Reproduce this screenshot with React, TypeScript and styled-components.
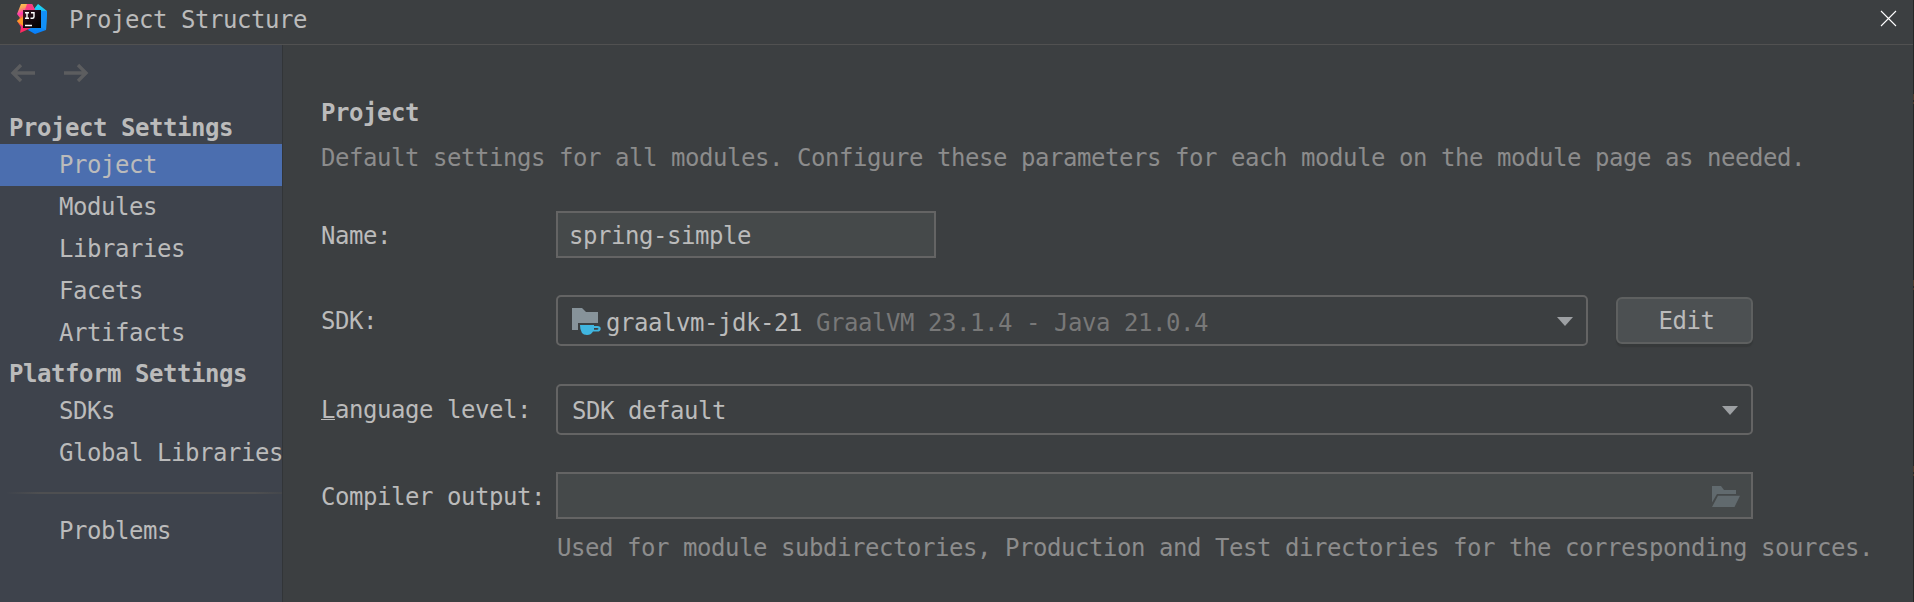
import React from 'react';
import styled, { createGlobalStyle, css } from 'styled-components';

const GlobalStyle = createGlobalStyle`
  * { box-sizing: border-box; }
  body { margin: 0; background: #3c3f41; overflow: hidden; }
`;

const Screen = styled.div`
  width: 1914px;
  height: 602px;
  display: flex;
  overflow: hidden;
`;

const Dialog = styled.div`
  width: 1913px;
  display: flex;
  flex-direction: column;
  background: #3c3f41;
  color: #bbbbbb;
  font: 24px/28px 'DejaVu Sans Mono', 'Liberation Mono', monospace;
  letter-spacing: -0.449px;
  white-space: pre;
  overflow: hidden;
`;

/* Sliver of the editor window behind the dialog */
const Backdrop = styled.div`
  width: 1px;
  background: repeating-linear-gradient(180deg, #262626 0 94px, #4d3a2b 94px 100px, #262626 100px 102px, #4d3a2b 102px 104px, #262626 104px 186px);
`;

const TitleBar = styled.header`
  height: 45px;
  flex: none;
  display: flex;
  align-items: flex-start;
  border-bottom: 1px solid #515151;
  padding: 3px 16px 0 16px;
`;

const Title = styled.h1`
  margin: 3px 0 0 21px;
  font: inherit;
  flex: 1;
`;

const CloseButton = styled.button`
  border: 0;
  padding: 0;
  margin-top: 7px;
  background: none;
  display: flex;
`;

const Body = styled.div`
  flex: 1;
  display: flex;
  min-height: 0;
`;

const Sidebar = styled.nav`
  width: 283px;
  flex: none;
  background: #3e434c;
  border-right: 1px solid #323538;
  overflow: hidden;
`;

const NavArrows = styled.div`
  height: 63px;
  padding: 18px 0 0 10px;
  display: flex;
  gap: 27px;
`;

const GroupTitle = styled.div`
  height: 36px;
  padding: 6px 0 0 9px;
  font-weight: bold;
`;

const NavItem = styled.div<{ $selected?: boolean }>`
  height: 42px;
  padding: 7px 0 0 59px;
  ${(p) => p.$selected && css`background: #4b6eaf;`}
`;

const Divider = styled.div`
  height: 2px;
  margin: 18px 0 16px 6px;
  background: linear-gradient(90deg, transparent, #4e4f51 12%, #4e4f51 90%, #44474c);
`;

const Content = styled.main`
  flex: 1;
  min-width: 0;
  padding: 54px 0 0 38px;
`;

const Heading = styled.h2`
  margin: 0 0 17px;
  font: inherit;
  font-weight: bold;
`;

const Hint = styled.p`
  margin: 0;
  color: #8c8c8c;
`;

const OutputHint = styled(Hint)`
  margin: 15px 0 0 236px;
`;

const Row = styled.div<{ $gap: number }>`
  display: flex;
  align-items: center;
  margin-top: ${(p) => p.$gap}px;
`;

const Label = styled.label<{ $drop?: number }>`
  width: 235px;
  flex: none;
  padding-top: ${(p) => p.$drop ?? 0}px;
`;

const Mnemonic = styled.span`
  text-decoration: underline;
  text-decoration-thickness: 1px;
  text-underline-offset: 1px;
`;

const TextField = styled.div<{ $width: number }>`
  width: ${(p) => p.$width}px;
  height: 47px;
  border: 2px solid #646464;
  background: #45494a;
  display: flex;
  align-items: center;
  padding: 2px 11px 0 11px;
`;

const Combo = styled.div<{ $width: number }>`
  width: ${(p) => p.$width}px;
  height: 51px;
  border: 2px solid #646464;
  border-radius: 5px;
  display: flex;
  align-items: center;
  padding: 1px 13px 0 14px;
`;

const Value = styled.span<{ $drop?: number }>`
  flex: 1;
  padding-top: ${(p) => p.$drop ?? 0}px;
`;

const Muted = styled.span`
  color: #787878;
`;

const Button = styled.button`
  width: 137px;
  height: 47px;
  margin: 0 0 0 28px;
  border: 2px solid #5e6060;
  border-radius: 6px;
  background: #4c5052;
  box-shadow: 0 3px 1px #36393a;
  color: inherit;
  font: inherit;
  letter-spacing: inherit;
  padding: 0 0 0 4px;
`;

const Logo = () => (
  <svg width="32" height="32" viewBox="0 0 32 32">
    <defs>
      <linearGradient id="warm" x1="0" y1="0" x2="0.2" y2="1">
        <stop offset="0" stopColor="#fcd04a" />
        <stop offset="0.18" stopColor="#fba05a" />
        <stop offset="0.36" stopColor="#ff35b5" />
        <stop offset="0.55" stopColor="#fc801d" />
        <stop offset="0.8" stopColor="#fe2880" />
        <stop offset="1" stopColor="#fe2857" />
      </linearGradient>
      <linearGradient id="cool" x1="0" y1="0" x2="0" y2="1">
        <stop offset="0" stopColor="#1fdcf5" />
        <stop offset="0.5" stopColor="#16a0f2" />
        <stop offset="1" stopColor="#087cfa" />
      </linearGradient>
      <linearGradient id="tile" x1="0" y1="0" x2="1" y2="1">
        <stop offset="0" stopColor="#3a1424" />
        <stop offset="0.5" stopColor="#14080e" />
        <stop offset="1" stopColor="#000" />
      </linearGradient>
    </defs>
    <path d="M18 6L22 1L31 8L30 27L19 31L12 27Z" fill="url(#cool)" />
    <path d="M5 1L16 1L19 7L15 25L4 30L5 24L1 18L4 15L1 11Z" fill="url(#warm)" />
    <path d="M11 1H16L19 7H9Z" fill="#fb3b83" />
    <path d="M1 18L7 14V23Z" fill="#fc9a2a" />
    <path d="M25 8L31 8L30 27L25 24Z" fill="#1290f8" />
    <rect x="7" y="7" width="18" height="18" fill="url(#tile)" />
    <path d="M9 9.7H13M11 9.7V15.3M9 15.3H13M15 9.7H18V13.8Q18 15.3 16.5 15.3H14.5M9 22.5H16" stroke="#fff" strokeWidth="1.4" fill="none" />
  </svg>
);

const Arrow = ({ back }: { back?: boolean }) => (
  <svg width="26" height="20" viewBox="0 0 26 20" fill="none" stroke="#5c5d5f" strokeWidth="3.4">
    <path d={back ? 'M25 10H3M11 2L3 10L11 18' : 'M1 10H23M15 2L23 10L15 18'} />
  </svg>
);

const Chevron = () => (
  <svg width="16" height="9" viewBox="0 0 16 9">
    <path d="M0 0H16L8 9Z" fill="#9da0a3" />
  </svg>
);

const SdkIconBox = styled.svg`
  flex: none;
  margin-right: 4px;
`;

const SdkIcon = () => (
  <SdkIconBox width="30" height="27" viewBox="0 0 30 27">
    <path d="M0 0H10L14 4H26V15H6V22H0Z" fill="#87939a" />
    <path
      d="M8 17H22V18H25.3Q28.7 18 28.7 20.7Q28.7 23.5 25.3 23.5H21Q19 27 15 27Q8 27 8 17ZM22 20V21.7H25Q26.5 21.7 26.5 20.8Q26.5 20 25 20Z"
      fill="#40b6e0"
      fillRule="evenodd"
    />
  </SdkIconBox>
);

const FolderIcon = () => (
  <svg width="28" height="21" viewBox="0 0 28 21" fill="#616a6e">
    <path d="M0 0H9L12 4H24V8H5L0 16.5Z" />
    <path d="M6 9.7H28L22.5 21H0Z" />
  </svg>
);

export default function App() {
  return (
    <Screen>
      <GlobalStyle />
      <Dialog>
        <TitleBar>
          <Logo />
          <Title>Project Structure</Title>
          <CloseButton aria-label="Close">
            <svg width="17" height="17" viewBox="0 0 17 17" stroke="#fff" strokeWidth="1.1">
              <path d="M1 1L16 16M16 1L1 16" />
            </svg>
          </CloseButton>
        </TitleBar>
        <Body>
          <Sidebar>
            <NavArrows>
              <Arrow back />
              <Arrow />
            </NavArrows>
            <GroupTitle>Project Settings</GroupTitle>
            <NavItem $selected>Project</NavItem>
            <NavItem>Modules</NavItem>
            <NavItem>Libraries</NavItem>
            <NavItem>Facets</NavItem>
            <NavItem>Artifacts</NavItem>
            <GroupTitle>Platform Settings</GroupTitle>
            <NavItem>SDKs</NavItem>
            <NavItem>Global Libraries</NavItem>
            <Divider />
            <NavItem>Problems</NavItem>
          </Sidebar>
          <Content>
            <Heading>Project</Heading>
            <Hint>Default settings for all modules. Configure these parameters for each module on the module page as needed.</Hint>
            <Row $gap={39}>
              <Label $drop={2}>Name:</Label>
              <TextField $width={380}>
                <Value>spring-simple</Value>
              </TextField>
            </Row>
            <Row $gap={37}>
              <Label>SDK:</Label>
              <Combo $width={1032}>
                <SdkIcon />
                <Value $drop={3}>
                  graalvm-jdk-21 <Muted>GraalVM 23.1.4 - Java 21.0.4</Muted>
                </Value>
                <Chevron />
              </Combo>
              <Button>Edit</Button>
            </Row>
            <Row $gap={38}>
              <Label><Mnemonic>L</Mnemonic>anguage level:</Label>
              <Combo $width={1197}>
                <Value $drop={1}>SDK default</Value>
                <Chevron />
              </Combo>
            </Row>
            <Row $gap={37}>
              <Label $drop={2}>Compiler output:</Label>
              <TextField $width={1197}>
                <Value />
                <FolderIcon />
              </TextField>
            </Row>
            <OutputHint>Used for module subdirectories, Production and Test directories for the corresponding sources.</OutputHint>
          </Content>
        </Body>
      </Dialog>
      <Backdrop />
    </Screen>
  );
}
